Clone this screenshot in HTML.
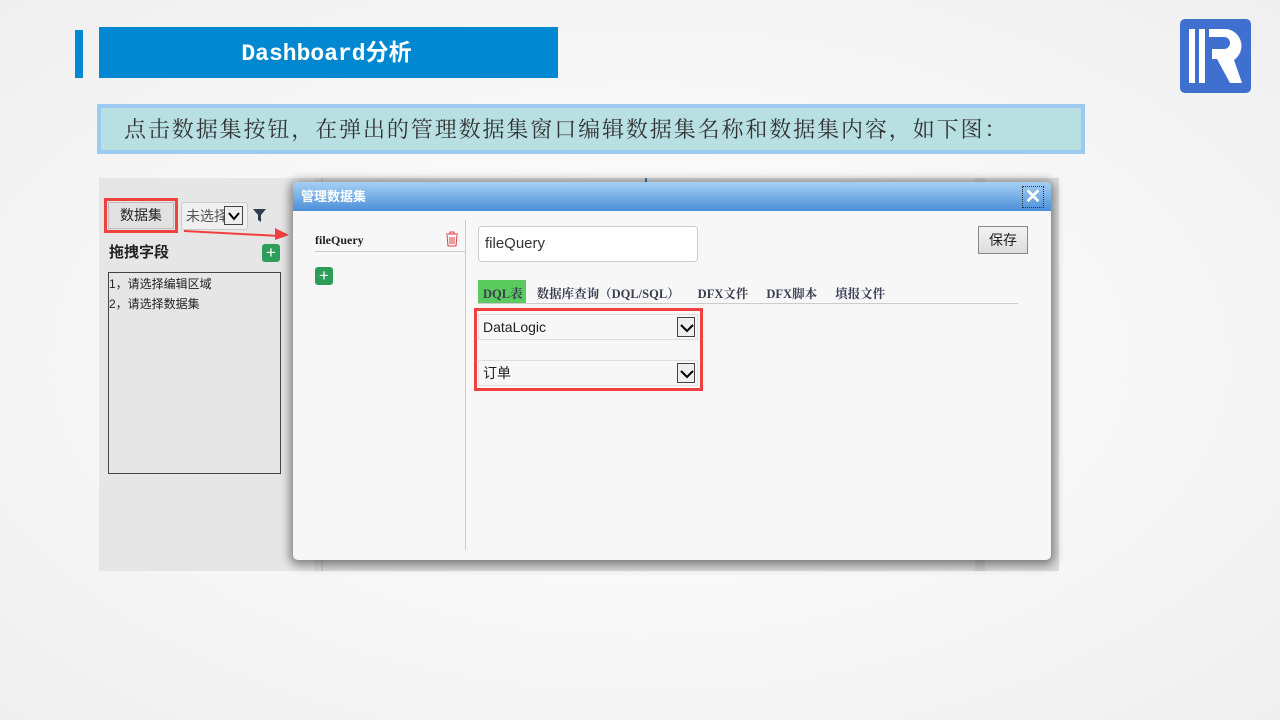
<!DOCTYPE html>
<html><head><meta charset="utf-8"><style>
*{margin:0;padding:0;box-sizing:border-box}
body{width:1280px;height:720px;overflow:hidden;position:relative;background:radial-gradient(ellipse at 50% 50%,#fff 0%,#f8f8f8 50%,#efefef 100%);font-family:"Liberation Sans","Noto Sans CJK SC",sans-serif}
.a{position:absolute}
.serif{font-family:"Liberation Serif","Noto Serif CJK SC",serif}
.chk{background:#eee;border:1px solid #444}
</style></head><body>
<div class="a" style="left:75px;top:30px;width:8px;height:48px;background:#0288d1"></div>
<div class="a" style="left:99px;top:27px;width:459px;height:51px;background:#0288d1;color:#fff;font:bold 23px 'Liberation Mono','Noto Sans CJK SC',monospace;text-align:center;line-height:54px;padding-right:4px">Dashboard分析</div>
<svg class="a" style="left:1180px;top:19px" width="71" height="74" viewBox="0 0 71 74"><rect width="71" height="74" rx="5" fill="#3f6fcf"/><rect x="9" y="10" width="6" height="54" fill="#fff"/><rect x="19" y="10" width="6" height="54" fill="#fff"/><path d="M29 10h17a17 17 0 0 1 8 31l8 23h-12l-13-24h-5v-10h12a6 6 0 0 0 0-12h-15z" fill="#fff"/></svg>
<div class="a" style="left:97px;top:104px;width:988px;height:50px;border:4px solid #9ccaf0;background:#b8dfe2;color:#333;font-family:'Noto Serif CJK SC',serif;font-size:22px;letter-spacing:1.9px;line-height:42px;padding-left:23px;white-space:nowrap">点击数据集按钮，在弹出的管理数据集窗口编辑数据集名称和数据集内容，如下图：</div>
<div class="a" style="left:99px;top:178px;width:960px;height:393px;background:#ebebeb;overflow:hidden">
 <div class="a" style="left:0;top:0;width:215px;height:393px;background:#e6e6e6"></div>
 <div class="a" style="left:215px;top:0;width:745px;height:393px;background:#dcdcdc"></div>
 <div class="a" style="left:222px;top:0;width:2px;height:393px;background:#ccc"></div>
 <div class="a" style="left:546px;top:0;width:2px;height:10px;background:#3b6fb0"></div>
 <div class="a" style="left:876px;top:0;width:10px;height:393px;background:#cfcfcf"></div>
 <div class="a" style="left:5px;top:20px;width:74px;height:35px;border:3px solid #f04040"></div>
 <div class="a" style="left:9px;top:24px;width:66px;height:27px;background:#e2e2e2;border:1px solid #bbb;font-size:14px;line-height:25px;text-align:center;color:#222">数据集</div>
 <div class="a" style="left:82px;top:24px;width:67px;height:28px;border:1px solid #ccc;border-radius:3px;background:#f0f0f0;font-size:14px;line-height:26px;padding-left:4px;color:#555;overflow:hidden;white-space:nowrap">未选择</div>
 <svg class="a chk" style="left:125px;top:28px" width="19" height="19"><path d="M4 6l5 6 5-6" stroke="#000" stroke-width="2" fill="none"/></svg>
 <svg class="a" style="left:154px;top:31px" width="13" height="13"><path d="M0 0h13L8 6v7L5 11V6z" fill="#2d3e50"/></svg>
 <div class="a" style="left:10px;top:63px;font-size:15px;font-weight:bold;color:#222">拖拽字段</div>
 <div class="a" style="left:163px;top:66px;width:18px;height:18px;background:#2d9e5a;border-radius:3px;color:#fff;font-size:17px;line-height:17px;text-align:center">+</div>
 <div class="a" style="left:9px;top:94px;width:173px;height:202px;border:1px solid #444;font-size:12px;line-height:20px;color:#222;padding-top:1px">1，请选择编辑区域<br>2，请选择数据集</div>
 <div class="a" style="left:85px;top:52px;width:100px;height:2px;background:#f04040;transform:rotate(3deg);transform-origin:left"></div>
 <svg class="a" style="left:176px;top:50px" width="14" height="12"><path d="M0 0l14 7L0 12z" fill="#f04040"/></svg>
</div>
<div class="a" style="left:293px;top:182px;width:758px;height:378px;background:#f7f7f7;border-radius:5px;box-shadow:0 2px 10px 3px rgba(0,0,0,.45);overflow:hidden">
 <div class="a" style="left:0;top:0;width:758px;height:29px;background:linear-gradient(#a6d0f4,#4a8fd9);color:#fff;font-size:13px;font-weight:bold;line-height:30px;padding-left:8px">管理数据集</div>
 <div class="a" style="left:729px;top:4px;width:22px;height:22px;border:1px dotted #333;color:#fff;font-size:20px;line-height:20px;text-align:center;font-weight:bold">✕</div>
 <div class="a serif" style="left:22px;top:51px;font-size:12px;font-weight:bold;color:#222">fileQuery</div>
 <div class="a" style="left:22px;top:69px;width:150px;height:1px;background:#ccc"></div>
 <svg class="a" style="left:151px;top:49px" width="16" height="16"><path d="M2 3h12M6 3V1h4v2M3 4l1 11h8l1-11M6 6v7M8 6v7M10 6v7" stroke="#e04040" fill="none"/></svg>
 <div class="a" style="left:22px;top:85px;width:18px;height:18px;background:#2d9e5a;border-radius:3px;color:#fff;font-size:17px;line-height:17px;text-align:center">+</div>
 <div class="a" style="left:172px;top:38px;width:1px;height:330px;background:#ccc"></div>
 <div class="a" style="left:185px;top:44px;width:220px;height:36px;border:1px solid #ccc;border-radius:4px;background:#fff;font-size:15px;line-height:34px;padding-left:6px;color:#333">fileQuery</div>
 <div class="a" style="left:685px;top:44px;width:50px;height:28px;border:1px solid #888;background:linear-gradient(#f2f2f2,#ddd);font-size:14px;line-height:26px;text-align:center;color:#222">保存</div>
 <div class="a" style="left:185px;top:98px;width:48px;height:24px;background:#5ccb5f"></div>
 <div class="a serif" style="left:190px;top:102px;font-size:12.5px;font-weight:bold;color:#3a3f50;white-space:nowrap">DQL表<span style="margin-left:14px">数据库查询（DQL/SQL）</span><span style="margin-left:18px">DFX文件</span><span style="margin-left:18px">DFX脚本</span><span style="margin-left:18px">填报文件</span></div>
 <div class="a" style="left:185px;top:121px;width:540px;height:1px;background:#ccc"></div>
 <div class="a" style="left:181px;top:126px;width:229px;height:83px;border:3px solid #f04040"></div>
 <div class="a" style="left:185px;top:132px;width:220px;height:26px;border:1px solid #ddd;font-size:14px;line-height:24px;padding-left:4px;color:#222">DataLogic</div>
 <div class="a" style="left:185px;top:178px;width:220px;height:26px;border:1px solid #ddd;font-size:14px;line-height:24px;padding-left:4px;color:#222">订单</div>
 <svg class="a chk" style="left:384px;top:135px" width="18" height="20"><path d="M3 7l6 6 6-6" stroke="#000" stroke-width="2" fill="none"/></svg>
 <svg class="a chk" style="left:384px;top:181px" width="18" height="20"><path d="M3 7l6 6 6-6" stroke="#000" stroke-width="2" fill="none"/></svg>
</div>
</body></html>
